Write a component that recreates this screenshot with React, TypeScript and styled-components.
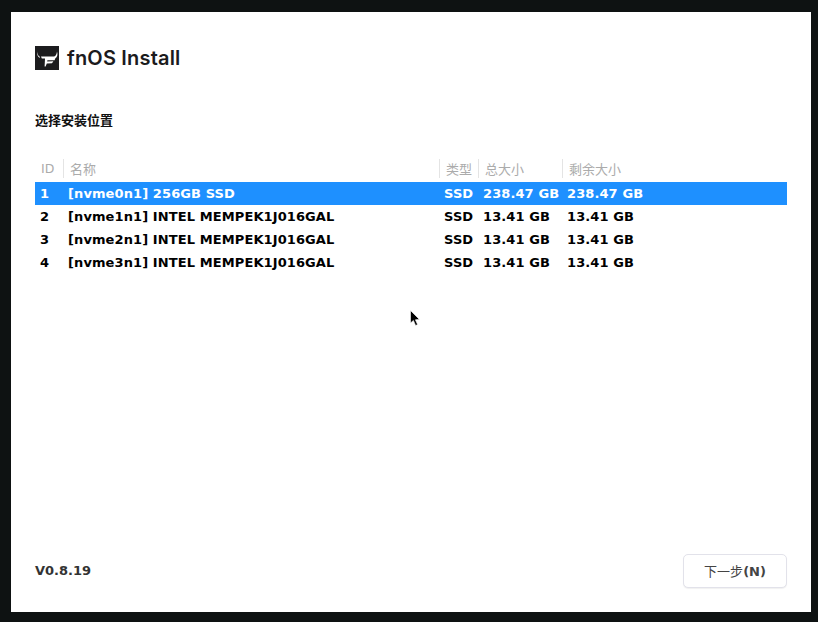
import React from "react";
import styled, { createGlobalStyle } from "styled-components";

const GlobalStyle = createGlobalStyle`
  html, body {
    margin: 0;
    padding: 0;
    background: #0e1212;
  }
`;

const Screen = styled.div`
  width: 818px;
  height: 622px;
  box-sizing: border-box;
  padding: 12px 7px 10px 11px;
  background: #0e1212;
  overflow: hidden;
`;

const Panel = styled.main`
  position: relative;
  width: 800px;
  height: 600px;
  box-sizing: border-box;
  padding: 34px 24px 24px;
  background: #fff;
  display: flex;
  flex-direction: column;
  color: #000;
  font-family: "DejaVu Sans", "Noto Sans CJK SC", sans-serif;
`;

const Brand = styled.header`
  display: flex;
  align-items: center;
  gap: 8px;
  height: 24px;
`;

const Title = styled.h1`
  margin: 0;
  font: 600 20px/24px Inter, "Liberation Sans", sans-serif;
  letter-spacing: 0.18px;
  color: #1b1b1d;
`;

const SectionLabel = styled.h2`
  margin: 42px 0 0;
  font: 700 13px/16px "Noto Sans CJK SC", sans-serif;
  color: #111;
`;

const DiskTable = styled.table`
  margin-top: 31px;
  width: 752px;
  table-layout: fixed;
  border-collapse: collapse;
`;

const HeadCell = styled.th`
  position: relative;
  height: 23px;
  padding: 0 0 3px 7px;
  box-sizing: border-box;
  text-align: left;
  font: 400 13px/16px "Noto Sans CJK SC", "DejaVu Sans", sans-serif;
  color: #ababab;

  & + &::before {
    content: "";
    position: absolute;
    left: 0;
    top: 0;
    width: 1px;
    height: 19px;
    background: #e4e4e4;
  }
`;

const IdHead = styled(HeadCell)`
  padding-left: 6px;
  font-family: "DejaVu Sans", sans-serif;
  font-size: 12.5px;
`;

const Row = styled.tr<{ $selected?: boolean }>`
  height: 23px;
  background: ${(p) => (p.$selected ? "#1e90ff" : "transparent")};
  color: ${(p) => (p.$selected ? "#fff" : "#000")};
`;

const Cell = styled.td`
  padding: 0 0 0 5px;
  font: 700 13px/23px "DejaVu Sans", sans-serif;
  letter-spacing: 0.1px;
  white-space: nowrap;
  overflow: visible;
`;

const Footer = styled.footer`
  margin-top: auto;
  display: flex;
  align-items: center;
  justify-content: space-between;
`;

const Version = styled.span`
  font: 700 13px/16px "DejaVu Sans", sans-serif;
  color: #333;
`;

const NextButton = styled.button`
  width: 104px;
  height: 34px;
  box-sizing: border-box;
  padding: 0;
  background: #fff;
  border: 1px solid #e2e2ea;
  border-radius: 5px;
  box-shadow: 0 1px 1px rgba(0, 0, 0, 0.06);
  font: 400 13px/32px "Noto Sans CJK SC", sans-serif;
  color: #444;

  b {
    font: 700 13px/32px "DejaVu Sans", sans-serif;
  }
`;

const Pointer = styled.svg`
  position: absolute;
  left: 399px;
  top: 298px;
`;

const disks = [
  { id: 1, name: "[nvme0n1] 256GB SSD", type: "SSD", total: "238.47 GB", free: "238.47 GB" },
  { id: 2, name: "[nvme1n1] INTEL MEMPEK1J016GAL", type: "SSD", total: "13.41 GB", free: "13.41 GB" },
  { id: 3, name: "[nvme2n1] INTEL MEMPEK1J016GAL", type: "SSD", total: "13.41 GB", free: "13.41 GB" },
  { id: 4, name: "[nvme3n1] INTEL MEMPEK1J016GAL", type: "SSD", total: "13.41 GB", free: "13.41 GB" },
];

function Logo(): React.ReactElement {
  return (
    <svg width="24" height="24" viewBox="0 0 24 24">
      <rect width="24" height="24" fill="#1c1c1e" />
      <path d="M2.2 5.6 C2.4 8 3 9.6 4.6 10.6 L5 12 C2.8 11.4 1.8 8.6 2.2 5.6 Z" fill="#fff" />
      <path
        d="M6 10.4 L19 10.4 C20.8 10 21.8 8 22 5.4 C23 8.4 22.4 11 20.2 12.4 L19.6 14.2 L12.4 14.2 L12.2 15.6 L18.4 15.2 L17 17.2 L11.8 17.6 L10.6 20.4 L9.6 20.4 L10 12.4 L6.8 12.4 Z"
        fill="#fff"
      />
    </svg>
  );
}

export default function App(): React.ReactElement {
  return (
    <Screen>
      <GlobalStyle />
      <Panel>
        <Brand>
          <Logo />
          <Title>fnOS Install</Title>
        </Brand>
        <SectionLabel>选择安装位置</SectionLabel>
        <DiskTable>
          <colgroup>
            <col width="28" />
            <col width="376" />
            <col width="39" />
            <col width="84" />
            <col />
          </colgroup>
          <thead>
            <tr>
              <IdHead>ID</IdHead>
              <HeadCell>名称</HeadCell>
              <HeadCell>类型</HeadCell>
              <HeadCell>总大小</HeadCell>
              <HeadCell>剩余大小</HeadCell>
            </tr>
          </thead>
          <tbody>
            {disks.map((d) => (
              <Row key={d.id} $selected={d.id === 1}>
                <Cell>{d.id}</Cell>
                <Cell>{d.name}</Cell>
                <Cell>{d.type}</Cell>
                <Cell>{d.total}</Cell>
                <Cell>{d.free}</Cell>
              </Row>
            ))}
          </tbody>
        </DiskTable>
        <Footer>
          <Version>V0.8.19</Version>
          <NextButton>
            下一步<b>(N)</b>
          </NextButton>
        </Footer>
        <Pointer width="12" height="18" viewBox="0 0 12 18">
          <path d="M0.5 0.5 L0.5 13 L3.4 10.4 L5.6 15.5 L7.6 14.6 L5.4 9.8 L9.4 9.4 Z" fill="#000" stroke="#fff" strokeWidth="0.6" />
        </Pointer>
      </Panel>
    </Screen>
  );
}
